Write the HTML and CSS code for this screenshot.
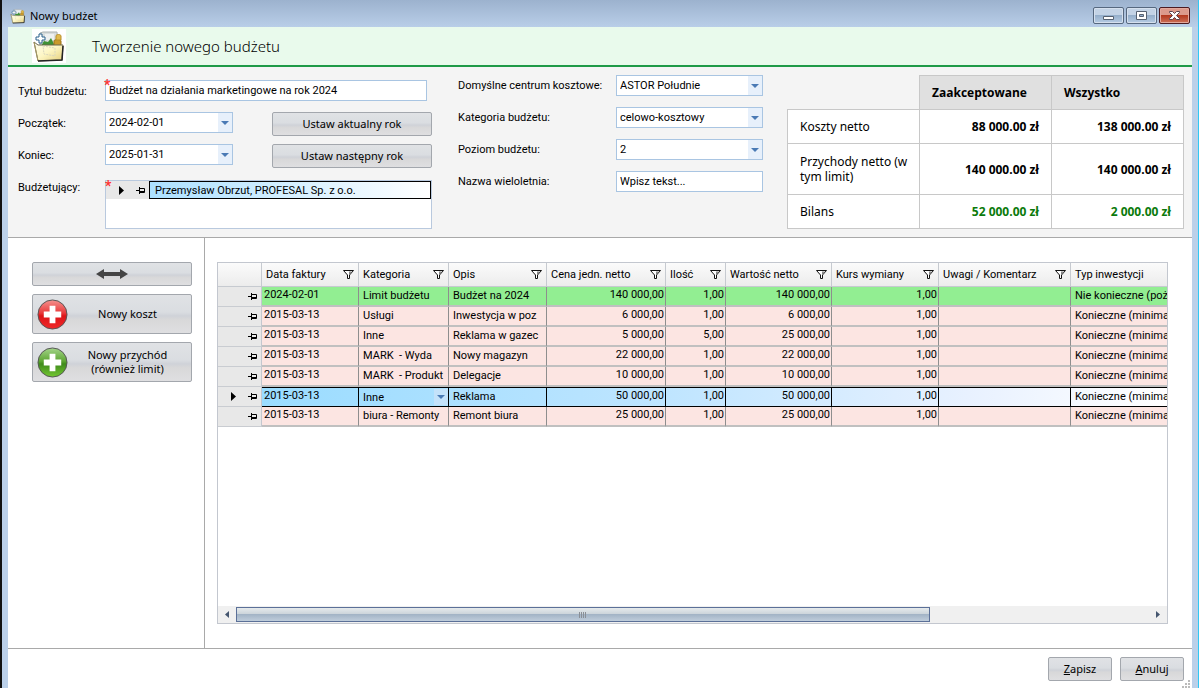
FILE: index.html
```html
<!DOCTYPE html>
<html lang="pl">

<head>
    <meta charset="UTF-8">
    <meta name="viewport" content="width=device-width, initial-scale=1.0">
    <title>Nowy budżet</title>
    <link rel="stylesheet" href="styles.css">
</head>

<body>
    <!-- Shared icons -->
    <svg class="sprite" aria-hidden="true">
        <defs>
            <linearGradient id="folder-fill" x1="0" y1="0" x2="1" y2="1">
                <stop offset="0" stop-color="#fffef0" />
                <stop offset="0.5" stop-color="#fdf6c4" />
                <stop offset="1" stop-color="#e5cf7c" />
            </linearGradient>
            <linearGradient id="red-fill" x1="0" y1="0" x2="0" y2="1">
                <stop offset="0" stop-color="#f4938f" />
                <stop offset="0.45" stop-color="#e8383a" />
                <stop offset="0.55" stop-color="#dc1418" />
                <stop offset="1" stop-color="#f02a2a" />
            </linearGradient>
            <linearGradient id="green-fill" x1="0" y1="0" x2="0" y2="1">
                <stop offset="0" stop-color="#a4d48a" />
                <stop offset="0.45" stop-color="#5ea634" />
                <stop offset="0.55" stop-color="#3f8a1c" />
                <stop offset="1" stop-color="#74c832" />
            </linearGradient>
            <symbol id="folder" viewBox="0 0 34 34">
                <path d="M8 4l3-1 14 0 1 15H8z" fill="#d9dddd" stroke="#aab0b0" />
                <path d="M13 5h9v6h-9z" fill="#eef0f0" />
                <path d="M9 17l3-5 4 1 3-4 4 8z" fill="#3f9135" />
                <path d="M22 12c0-2 7-2 7 0v6h-7z" fill="#c9992a" stroke="#9b7217" />
                <path d="M24 7c0-2 5-2 5 0v4h-5z" fill="#e1ba4c" stroke="#b98f2a" />
                <path d="M2 13l4 3h25l-1 15-24 1z" fill="url(#folder-fill)" stroke="#6c674e" />
                <path d="M2 13l4 19" fill="none" stroke="#a79a63" />
                <path d="M31 17l-1 14-24 1" fill="none" stroke="#242424" stroke-width="1.500" />
                <path d="M11 17l12 2v8l-11-2z" fill="none" stroke="#d9d6bd" stroke-dasharray="2 1" />
                <path d="M7 5h3v3h3v3h-3v3H7v-3H4V8h3z" fill="#fff" stroke="#2d628d" />
            </symbol>
            <symbol id="pin" viewBox="0 0 9 7">
                <path d="M0 3.500h3M3.500 0v7M3.500 1.500h5v4h-5M3.500 4.500h5" fill="none" stroke="#000" />
            </symbol>
            <symbol id="filter" viewBox="0 0 11 9">
                <path d="M.5 .5h10L6.500 5v3.500h-2V5z" fill="#fff" stroke="#111" />
                <path d="M6 1.500h3L6 5z" fill="#888" />
            </symbol>
            <symbol id="current" viewBox="0 0 5 9">
                <path d="M0 0l5 4.500L0 9z" fill="#000" />
            </symbol>
            <symbol id="plus" viewBox="0 0 32 32">
                <path d="M13 7h6v6h6v6h-6v6h-6v-6H7v-6h6z" fill="#fff" />
            </symbol>
        </defs>
    </svg>

    <div class="window">
        <div class="titlebar">
            <svg class="title-icon"><use href="#folder" /></svg>
            <span class="title-text">Nowy budżet</span>
            <div class="window-buttons">
                <button class="window-btn" aria-label="Minimalizuj">
                    <svg width="13" height="13"><path d="M1.500 7.500h10v3h-10z" fill="#fff" stroke="#566171" /></svg>
                </button>
                <button class="window-btn" aria-label="Maksymalizuj">
                    <svg width="13" height="13"><path d="M1.500 2.500h10v8h-10zM4.500 5.500v2h4v-2z" fill="#fff" fill-rule="evenodd" stroke="#566171" /></svg>
                </button>
                <button class="window-btn close-btn" aria-label="Zamknij">
                    <svg width="13" height="13"><path d="M1.500 2.500h3l2 2 2-2h3v1L8.500 6.500l3 3v1h-3l-2-2-2 2h-3v-1l3-3-3-3z" fill="#fff" stroke="#5b4450" /></svg>
                </button>
            </div>
        </div>

        <div class="content">
            <header class="header">
                <svg class="header-icon"><use href="#folder" /></svg>
                <h1>Tworzenie nowego budżetu</h1>
            </header>

            <section class="form">
                <div class="form-left">
                    <label for="tytul">Tytuł budżetu:</label>
                    <div class="required wide">
                        <input type="text" id="tytul" class="field" value="Budżet na działania marketingowe na rok 2024">
                    </div>

                    <label for="poczatek">Początek:</label>
                    <select id="poczatek" class="field"><option>2024-02-01</option></select>
                    <button class="btn">Ustaw aktualny rok</button>

                    <label for="koniec">Koniec:</label>
                    <select id="koniec" class="field"><option>2025-01-31</option></select>
                    <button class="btn">Ustaw następny rok</button>

                    <label for="budzetujacy" class="list-label">Budżetujący:</label>
                    <div class="required list">
                        <div class="list-row">
                            <span class="list-marker">
                                <svg class="current"><use href="#current" /></svg>
                                <svg class="pin"><use href="#pin" /></svg>
                            </span>
                            <input type="text" id="budzetujacy" class="list-value" value="Przemysław Obrzut, PROFESAL Sp. z o.o.">
                        </div>
                    </div>
                </div>

                <div class="form-middle">
                    <label for="centrum">Domyślne centrum kosztowe:</label>
                    <select id="centrum" class="field"><option>ASTOR Południe</option></select>
                    <label for="kategoria">Kategoria budżetu:</label>
                    <select id="kategoria" class="field"><option>celowo-kosztowy</option></select>
                    <label for="poziom">Poziom budżetu:</label>
                    <select id="poziom" class="field"><option>2</option></select>
                    <label for="nazwa">Nazwa wieloletnia:</label>
                    <input type="text" id="nazwa" class="field" value="Wpisz tekst...">
                </div>

                <table class="summary">
                    <thead>
                        <tr>
                            <td></td>
                            <th>Zaakceptowane</th>
                            <th>Wszystko</th>
                        </tr>
                    </thead>
                    <tbody>
                        <tr>
                            <td>Koszty netto</td>
                            <td class="sum">88 000.00 zł</td>
                            <td class="sum">138 000.00 zł</td>
                        </tr>
                        <tr class="two-line">
                            <td>Przychody netto (w tym limit)</td>
                            <td class="sum">140 000.00 zł</td>
                            <td class="sum">140 000.00 zł</td>
                        </tr>
                        <tr>
                            <td>Bilans</td>
                            <td class="sum positive">52 000.00 zł</td>
                            <td class="sum positive">2 000.00 zł</td>
                        </tr>
                    </tbody>
                </table>
            </section>

            <main class="main">
                <aside class="sidebar">
                    <button class="btn" aria-label="Zmień szerokość">
                        <svg width="32" height="12"><path d="M0 6l8-5v3h16V1l8 5-8 5V8H8v3z" fill="#444" /></svg>
                    </button>
                    <button class="btn big-btn">
                        <svg class="round-icon" viewBox="0 0 32 32"><circle cx="16" cy="16" r="15" fill="url(#red-fill)" stroke="#555" /><use href="#plus" /></svg>
                        <span>Nowy koszt</span>
                    </button>
                    <button class="btn big-btn">
                        <svg class="round-icon" viewBox="0 0 32 32"><circle cx="16" cy="16" r="15" fill="url(#green-fill)" stroke="#555" /><use href="#plus" /></svg>
                        <span>Nowy przychód<br>(również limit)</span>
                    </button>
                </aside>

                <div class="grid-area">
                    <div class="grid-box">
                        <div class="grid-scroll">
                            <table class="grid">
                                <colgroup>
                                    <col class="c-mark">
                                    <col class="c-date">
                                    <col class="c-cat">
                                    <col class="c-desc">
                                    <col class="c-price">
                                    <col class="c-qty">
                                    <col class="c-value">
                                    <col class="c-rate">
                                    <col class="c-notes">
                                    <col class="c-type">
                                </colgroup>
                                <thead>
                                    <tr id="grid-head"></tr>
                                </thead>
                                <tbody id="grid-body"></tbody>
                            </table>
                        </div>
                        <div class="scrollbar">
                            <button class="scroll-btn" aria-label="W lewo"><svg width="4" height="7"><path d="M4 0v7L0 3.500z" fill="#45566f" /></svg></button>
                            <div class="scroll-track">
                                <div class="scroll-thumb"><i></i><i></i><i></i><i></i></div>
                            </div>
                            <button class="scroll-btn" aria-label="W prawo"><svg width="4" height="7"><path d="M0 0v7l4-3.500z" fill="#45566f" /></svg></button>
                        </div>
                    </div>
                </div>
            </main>

            <footer class="footer">
                <button class="btn"><u>Z</u>apisz</button>
                <button class="btn"><u>A</u>nuluj</button>
                <svg class="grip" width="8" height="8"><path d="M6 0h2v2H6zM3 3h2v2H3zM6 3h2v2H6zM0 6h2v2H0zM3 6h2v2H3zM6 6h2v2H6z" fill="#bbb" /></svg>
            </footer>
        </div>
    </div>

    <script src="script.js"></script>
</body>

</html>
```
FILE: styles.css
```css
* {
    box-sizing: border-box;
}

body {
    margin: 0;
    background-color: #fff;
    color: #000;
    font-family: Roboto, "Liberation Sans", Arial, sans-serif;
    font-size: 11px;
}

button,
input,
select {
    font-family: inherit;
    font-size: inherit;
    color: inherit;
}

.sprite {
    display: block;
    width: 0;
    height: 0;
}

/* Window frame */
.window {
    display: flex;
    flex-direction: column;
    min-height: 100vh;
    padding: 0 6px;
    background-color: #bbd0e9;
    border-left: 2px solid #111;
    border-right: 1px solid #2fc8f5;
}

.titlebar {
    display: flex;
    align-items: center;
    height: 27px;
    margin: 0 -6px;
    padding: 4px 8px 0 8px;
    background: linear-gradient(#9cb2ce, #b9cee8);
}

.title-icon {
    width: 16px;
    height: 16px;
}

.title-text {
    flex: 1;
    margin-left: 4px;
    font-family: "Noto Sans", sans-serif;
    font-size: 11px;
}

.window-buttons {
    display: flex;
    gap: 2px;
}

.window-btn {
    display: flex;
    align-items: center;
    justify-content: center;
    width: 31px;
    height: 17px;
    padding: 0;
    border: 1px solid #56687f;
    border-radius: 2px;
    box-shadow: inset 0 0 0 1px #d5e0ee;
    background: linear-gradient(#c3d3e6 50%, #95afcb 50%, #b6cce4);
}

.close-btn {
    border-color: #4c1a20;
    box-shadow: inset 0 0 0 1px #e3a89c;
    background: linear-gradient(#dc9a8c 50%, #b43a20 50%, #cc7058);
}

.content {
    display: flex;
    flex: 1;
    flex-direction: column;
    background-color: #fff;
}

.header {
    display: flex;
    align-items: center;
    height: 40px;
    padding-left: 24px;
    background-color: #e9faec;
    border-bottom: 2px solid #1f9a47;
}

.header-icon {
    width: 34px;
    height: 34px;
    background-color: #fff;
}

h1 {
    margin: 0 0 0 26px;
    font-family: "Noto Sans", sans-serif;
    font-size: 15px;
    font-weight: 300;
    line-height: 20px;
}

/* Form */
.form {
    display: flex;
    align-items: flex-start;
    padding: 8px 8px 8px 10px;
    background-color: #f4f4f4;
    border-bottom: 1px solid #a9a9a9;
}

.form-left {
    display: grid;
    grid-template-columns: 87px 128px 160px;
    align-items: start;
    row-gap: 8px;
    margin-top: 5px;
    line-height: 24px;
}

.form-left .btn {
    width: 160px;
    margin-left: 39px;
}

.wide {
    grid-column: 2 / 4;
    width: 322px;
    height: 24px;
}

.required {
    position: relative;
}

.required::before {
    content: "*";
    position: absolute;
    top: -2px;
    left: -1px;
    color: #f33;
    font-size: 14px;
    font-weight: bold;
    line-height: 14px;
}

.field {
    display: block;
    width: 100%;
    height: 21px;
    padding: 0 3px;
    border: 1px solid #a9c5e2;
    border-radius: 0;
    background-color: #fff;
}

select.field {
    appearance: none;
    background-image: url("data:image/svg+xml,%3Csvg xmlns='http://www.w3.org/2000/svg' width='14' height='19'%3E%3Cpath d='M0 0h14v19H0z' fill='%23e7f0fb'/%3E%3Cpath d='M3 8h8l-4 4z' fill='%234a7ab5'/%3E%3C/svg%3E");
    background-repeat: no-repeat;
    background-position: right center;
}

.btn {
    display: flex;
    align-items: center;
    justify-content: center;
    height: 24px;
    padding: 0 8px;
    border: 1px solid #a3a7ad;
    border-radius: 2px;
    background: linear-gradient(#e0e2e5, #dadde1 45%, #cfd2d8 55%, #d8d8d9 65%, #dfdfe1);
    font-family: "Noto Sans", sans-serif;
    font-size: 11px;
    line-height: 14px;
}

.list {
    grid-column: 2 / 4;
    width: 327px;
    height: 49px;
    margin-top: 4px;
    border: 1px solid #b9c9de;
    background-color: #fff;
}

.list-row {
    display: flex;
    height: 18px;
}

.list-marker {
    display: flex;
    align-items: center;
    gap: 12px;
    width: 43px;
    padding-left: 13px;
    background-color: #e8e8e8;
}

.list-value {
    flex: 1;
    padding: 0 5px;
    border: 1px solid #000;
    background: linear-gradient(90deg, #ace0ff, #fff);
}

.current {
    width: 5px;
    height: 9px;
}

.pin {
    width: 9px;
    height: 7px;
}

.form-middle {
    display: grid;
    grid-template-columns: 158px 147px;
    align-items: center;
    row-gap: 11px;
    margin-left: 65px;
}

.summary {
    width: 397px;
    margin-left: auto;
    border-collapse: collapse;
    table-layout: fixed;
    font-family: "Noto Sans", sans-serif;
    font-size: 12px;
    line-height: 15px;
}

.summary th,
.summary td {
    height: 34px;
    padding: 9px 4px 9px 12px;
    border: 1px solid #c8c8c8;
    background-color: #fff;
    text-align: left;
}

.summary .two-line td {
    height: 51px;
}

.summary th {
    background-color: #e0e0e0;
    font-family: "Open Sans", sans-serif;
}

.summary thead td {
    border-top-color: transparent;
    border-left-color: transparent;
    background-color: transparent;
}

.summary td.sum {
    padding-right: 12px;
    font-family: "Open Sans", sans-serif;
    font-weight: bold;
    text-align: right;
}

.summary .positive {
    color: #0b7a0b;
}

/* Sidebar and grid */
.main {
    display: flex;
    flex: 1;
}

.sidebar {
    display: flex;
    flex-direction: column;
    gap: 8px;
    width: 197px;
    padding: 24px 12px 0 24px;
    border-right: 1px solid #a9a9a9;
}

.big-btn {
    height: 40px;
    padding: 0 4px;
}

.big-btn span {
    flex: 1;
    text-align: center;
}

.round-icon {
    width: 31px;
    height: 31px;
}

.grid-area {
    display: flex;
    flex: 1;
    min-width: 0;
    padding: 24px 24px 24px 12px;
}

.grid-box {
    display: flex;
    flex: 1;
    flex-direction: column;
    min-width: 0;
    border: 1px solid #c3c7cf;
}

.grid-scroll {
    flex: 1;
    overflow: hidden;
}

.grid {
    width: 1001px;
    border-collapse: separate;
    border-spacing: 0;
    table-layout: fixed;
}

.c-mark { width: 44px; }
.c-date { width: 97px; }
.c-cat { width: 90px; }
.c-desc { width: 98px; }
.c-price { width: 119px; }
.c-qty { width: 60px; }
.c-value { width: 106px; }
.c-rate { width: 107px; }
.c-notes { width: 132px; }
.c-type { width: 148px; }

.grid th {
    height: 24px;
    padding: 0 4px;
    border-right: 1px solid #c6cad0;
    border-bottom: 1px solid #c6cad0;
    background: linear-gradient(#fbfbfb, #ececec);
    font-weight: normal;
    text-align: left;
    white-space: nowrap;
}

.head-cell {
    display: flex;
    align-items: center;
    justify-content: space-between;
}

.filter {
    width: 11px;
    height: 9px;
}

.grid td {
    height: 20px;
    padding: 0 4px;
    overflow: hidden;
    border-right: 1px solid #8e8e8e;
    border-bottom: 2px solid #c0c0c0;
    background-color: #fce5e2;
    line-height: 18px;
    white-space: pre;
}

.grid td.date,
.grid td.num {
    padding: 0 1px 2px 2px;
    line-height: 16px;
}

.grid td.num {
    text-align: right;
}

.grid .income td {
    background-color: #92ee92;
}

.grid td.mark {
    padding: 0 4px 0 12px;
    border-right: 1px solid #c3c7cf;
    border-bottom: 1px solid #c9ccd1;
    background-color: #e8e8e8;
}

.grid .income td.mark {
    background-color: #e8e8e8;
}

.mark-cell {
    display: flex;
    align-items: center;
    justify-content: flex-end;
    gap: 12px;
}

.grid .selected td.data {
    border-right-color: #000;
    border-bottom: 1px solid #000;
    box-shadow: inset 0 1px #000;
    background-color: transparent;
}

.grid .selected {
    background: linear-gradient(90deg, #96dbff, #bfe5ff 45%, #e8f1ff 75%, #fff 95%);
}

.grid .selected td.with-select {
    padding-right: 0;
}

.grid-select {
    display: block;
    width: 100%;
    height: 17px;
    margin: 1px 0 0;
    padding: 0;
    border: 0;
    appearance: none;
    background: url("data:image/svg+xml,%3Csvg xmlns='http://www.w3.org/2000/svg' width='14' height='16'%3E%3Cpath d='M0 0h14v16H0z' fill='%23c4e2fa'/%3E%3Cpath d='M3 6h8l-4 4z' fill='%234a7ab5'/%3E%3C/svg%3E") no-repeat right center;
}

.scrollbar {
    display: flex;
    height: 17px;
    background-color: #f0f0f0;
}

.scroll-btn {
    display: flex;
    align-items: center;
    justify-content: center;
    width: 18px;
    padding: 0;
    border: 0;
    background: transparent;
}

.scroll-track {
    flex: 1;
    padding: 1px 0;
}

.scroll-thumb {
    display: flex;
    align-items: center;
    justify-content: center;
    gap: 1px;
    width: 76%;
    height: 15px;
    border: 1px solid #5b7098;
    background: linear-gradient(#e6eaec, #ccd5db 45%, #a3b4c6 50%, #bfcddb);
}

.scroll-thumb i {
    width: 1px;
    height: 6px;
    background-color: #8a8f96;
}

.footer {
    position: relative;
    display: flex;
    justify-content: flex-end;
    gap: 8px;
    height: 40px;
    padding: 8px;
    border-top: 1px solid #a9a9a9;
}

.footer .btn {
    width: 64px;
}

.grip {
    position: absolute;
    right: 2px;
    bottom: 0;
}
```
FILE: script.js
```js
const columns = ['Data faktury', 'Kategoria', 'Opis', 'Cena jedn. netto', 'Ilość', 'Wartość netto', 'Kurs wymiany', 'Uwagi / Komentarz', 'Typ inwestycji'];

const rows = [
    { date: '2024-02-01', category: 'Limit budżetu', desc: 'Budżet na 2024', price: '140 000,00', qty: '1,00', value: '140 000,00', type: 'Nie konieczne (pożądane)', state: 'income' },
    { date: '2015-03-13', category: 'Usługi', desc: 'Inwestycja w poz', price: '6 000,00', qty: '1,00', value: '6 000,00', type: 'Konieczne (minimalne)' },
    { date: '2015-03-13', category: 'Inne', desc: 'Reklama w gazec', price: '5 000,00', qty: '5,00', value: '25 000,00', type: 'Konieczne (minimalne)' },
    { date: '2015-03-13', category: 'MARK  - Wyda', desc: 'Nowy magazyn', price: '22 000,00', qty: '1,00', value: '22 000,00', type: 'Konieczne (minimalne)' },
    { date: '2015-03-13', category: 'MARK  - Produkt', desc: 'Delegacje', price: '10 000,00', qty: '1,00', value: '10 000,00', type: 'Konieczne (minimalne)' },
    { date: '2015-03-13', category: 'Inne', desc: 'Reklama', price: '50 000,00', qty: '1,00', value: '50 000,00', type: 'Konieczne (minimalne)', state: 'selected' },
    { date: '2015-03-13', category: 'biura - Remonty', desc: 'Remont biura', price: '25 000,00', qty: '1,00', value: '25 000,00', type: 'Konieczne (minimalne)' }
];

function renderHead() {
    document.getElementById('grid-head').innerHTML = '<th></th>' + columns.map(name =>
        `<th><div class="head-cell">${name}<svg class="filter"><use href="#filter" /></svg></div></th>`
    ).join('');
}

function renderRows() {
    document.getElementById('grid-body').innerHTML = rows.map(row => {
        const selected = row.state === 'selected';
        const category = selected
            ? `<select class="grid-select" aria-label="Kategoria"><option>${row.category}</option></select>`
            : row.category;
        return `<tr class="${row.state || ''}">` +
            `<td class="mark"><div class="mark-cell">${selected ? '<svg class="current"><use href="#current" /></svg>' : ''}<svg class="pin"><use href="#pin" /></svg></div></td>` +
            `<td class="data date">${row.date}</td>` +
            `<td class="data with-select">${category}</td>` +
            `<td class="data">${row.desc}</td>` +
            `<td class="data num">${row.price}</td>` +
            `<td class="data num">${row.qty}</td>` +
            `<td class="data num">${row.value}</td>` +
            `<td class="data num">1,00</td>` +
            `<td class="data"></td>` +
            `<td class="data">${row.type}</td></tr>`;
    }).join('');
}

renderHead();
renderRows();
```
